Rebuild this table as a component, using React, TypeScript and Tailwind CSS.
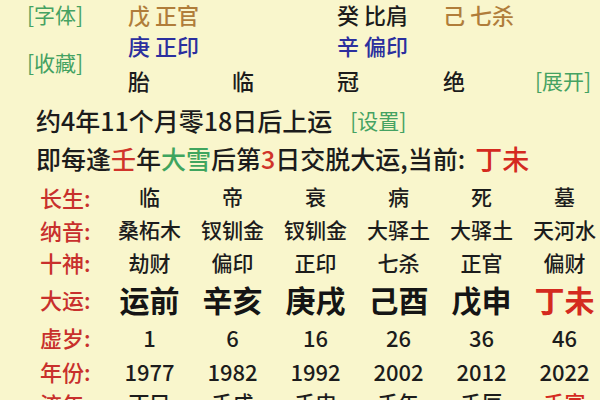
import React from "react";

const cols = [
  { cs: "临", ny: "桑柘木", ss: "劫财", dy: "运前", xs: "1", nf: "1977", ln: "丁巳", cur: false },
  { cs: "帝", ny: "钗钏金", ss: "偏印", dy: "辛亥", xs: "6", nf: "1982", ln: "壬戌", cur: false },
  { cs: "衰", ny: "钗钏金", ss: "正印", dy: "庚戌", xs: "16", nf: "1992", ln: "壬申", cur: false },
  { cs: "病", ny: "大驿土", ss: "七杀", dy: "己酉", xs: "26", nf: "2002", ln: "壬午", cur: false },
  { cs: "死", ny: "大驿土", ss: "正官", dy: "戊申", xs: "36", nf: "2012", ln: "壬辰", cur: false },
  { cs: "墓", ny: "天河水", ss: "偏财", dy: "丁未", xs: "46", nf: "2022", ln: "壬寅", cur: true },
];

function Row({
  label,
  h,
  children,
}: {
  label: string;
  h: string;
  children: React.ReactNode;
}) {
  return (
    <div className={`flex items-center ${h}`}>
      <div className="w-[68px] shrink-0 text-[22px] text-[#c8302c] leading-none">{label}:</div>
      {children}
    </div>
  );
}

export default function App() {
  return (
    <div
      className="w-[600px] h-[400px] overflow-hidden bg-[#f9f6cc] text-[#1c1c1c] font-medium"
      style={{ fontFamily: '"Noto Sans CJK SC", "Noto Sans", sans-serif' }}
    >
      {/* top section */}
      <div className="flex pl-[27px] h-[98px]">
        <div className="w-[101px] shrink-0 flex flex-col text-[21px] text-[#45a262] leading-none font-normal">
          <div className="h-[28px] flex items-center">[字体]</div>
          <div className="h-[20px]" />
          <div className="h-[28px] flex items-center">[收藏]</div>
        </div>
        <div className="flex flex-col text-[22px] leading-none">
          <div className="flex h-[28px] items-center">
            <div className="w-[209px] text-[#b07d3a]">戊 正官</div>
            <div className="w-[106px]">癸 比肩</div>
            <div className="text-[#b07d3a]">己 七杀</div>
          </div>
          <div className="flex h-[34px] items-center">
            <div className="w-[209px] text-[#2b2f9e]">庚 正印</div>
            <div className="text-[#2b2f9e]">辛 偏印</div>
          </div>
          <div className="flex h-[36px] items-center">
            <div className="w-[104px]">胎</div>
            <div className="w-[105px]">临</div>
            <div className="w-[106px]">冠</div>
            <div className="w-[92px]">绝</div>
            <div className="text-[21px] text-[#45a262] font-normal">[展开]</div>
          </div>
        </div>
      </div>

      {/* qiyun text */}
      <div className="pl-[36px]">
        <div className="h-[44px] flex items-center leading-none">
          <span className="text-[25px]">约4年11个月零18日后上运</span>
          <span className="ml-[18px] text-[21px] text-[#45a262] font-normal">[设置]</span>
        </div>
        <div className="h-[32px] flex items-center leading-none text-[25px]">
          <span>即每逢</span>
          <span className="text-[#d0342a]">壬</span>
          <span>年</span>
          <span className="text-[#3fa55e]">大雪</span>
          <span>后第</span>
          <span className="text-[#d0342a]">3</span>
          <span>日交脱大运,当前:</span>
          <span className="ml-[10px] text-[27px] text-[#d42a1f]">丁未</span>
        </div>
      </div>

      {/* table */}
      <div className="mt-[6px] pl-[40px]">
        <Row label="长生" h="h-[33px]">
          {cols.map((c, i) => (
            <div key={i} className="w-[83px] shrink-0 text-center text-[21px] leading-none">{c.cs}</div>
          ))}
        </Row>
        <Row label="纳音" h="h-[33px]">
          {cols.map((c, i) => (
            <div key={i} className="w-[83px] shrink-0 text-center text-[21px] leading-none">{c.ny}</div>
          ))}
        </Row>
        <Row label="十神" h="h-[32px]">
          {cols.map((c, i) => (
            <div key={i} className="w-[83px] shrink-0 text-center text-[21px] leading-none">{c.ss}</div>
          ))}
        </Row>
        <Row label="大运" h="h-[41px]">
          {cols.map((c, i) => (
            <div
              key={i}
              className={`w-[83px] shrink-0 text-center text-[30px] font-bold leading-none ${c.cur ? "text-[#d42a1f]" : "text-[#151515]"}`}
            >
              {c.dy}
            </div>
          ))}
        </Row>
        <Row label="虚岁" h="h-[36px]">
          {cols.map((c, i) => (
            <div key={i} className="w-[83px] shrink-0 text-center text-[22px] leading-none">{c.xs}</div>
          ))}
        </Row>
        <Row label="年份" h="h-[31px]">
          {cols.map((c, i) => (
            <div key={i} className="w-[83px] shrink-0 text-center text-[22px] leading-none">{c.nf}</div>
          ))}
        </Row>
        <Row label="流年" h="h-[33px]">
          {cols.map((c, i) => (
            <div
              key={i}
              className={`w-[83px] shrink-0 text-center text-[21px] leading-none ${c.cur ? "text-[#d42a1f]" : ""}`}
            >
              {c.ln}
            </div>
          ))}
        </Row>
      </div>
    </div>
  );
}
